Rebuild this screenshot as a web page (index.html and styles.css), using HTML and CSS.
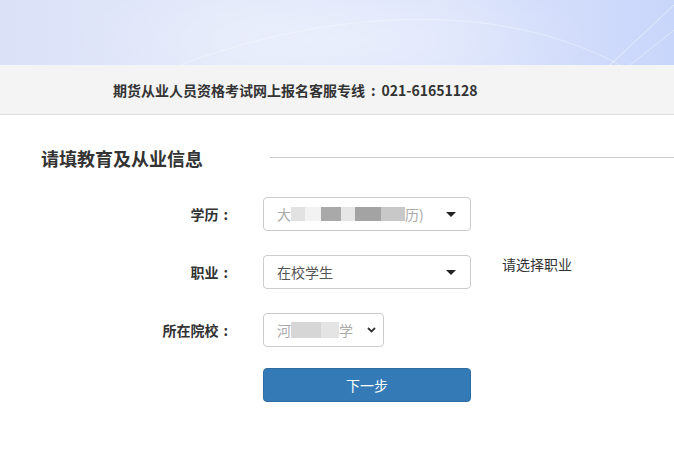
FILE: index.html
```html
<!DOCTYPE html>
<html lang="zh-CN">
<head>
    <meta charset="UTF-8">
    <meta name="viewport" content="width=device-width, initial-scale=1.0">
    <title>期货从业人员资格考试网上报名</title>
<link rel="stylesheet" href="styles.css">
</head>
<body>
    <div class="banner">
        <svg class="banner-lines" width="674" height="65" viewBox="0 0 674 65" preserveAspectRatio="none">
            <path d="M180 65 C 300 20, 480 -10, 620 65" fill="none" stroke="#ffffff" stroke-opacity="0.35" stroke-width="1"/>
            <path d="M610 65 L 674 5" fill="none" stroke="#ffffff" stroke-opacity="0.5" stroke-width="1"/>
            <path d="M630 65 L 674 30" fill="none" stroke="#ffffff" stroke-opacity="0.4" stroke-width="1"/>
        </svg>
    </div>
    <div class="hotline">期货从业人员资格考试网上报名客服专线<span class="colon">:</span>021-61651128</div>

    <div class="section-title">
        <h2>请填教育及从业信息</h2>
        <div class="title-line"></div>
    </div>

    <form class="info-form">
        <div class="form-row">
            <label class="form-label">学历<span class="colon">:</span></label>
            <div class="select wide">
                <span class="masked">
                    <span class="ch faint">大</span>
                    <span class="blk b1"></span>
                    <span class="blk b2"></span>
                    <span class="blk b3"></span>
                    <span class="blk b4"></span>
                    <span class="blk b5"></span>
                    <span class="blk b6"></span>
                    <span class="ch faint">历)</span>
                </span>
                <span class="caret"></span>
            </div>
        </div>
        <div class="form-row">
            <label class="form-label">职业<span class="colon">:</span></label>
            <div class="select wide">
                <span class="value">在校学生</span>
                <span class="caret"></span>
            </div>
            <span class="hint">请选择职业</span>
        </div>
        <div class="form-row school-row">
            <label class="form-label">所在院校<span class="colon">:</span></label>
            <div class="select narrow">
                <span class="masked">
                    <span class="ch faint">河</span>
                    <span class="blk c1"></span>
                    <span class="blk c2"></span>
                    <span class="ch faint">学</span>
                </span>
                <svg class="chevron" width="9" height="6" viewBox="0 0 9 6"><path d="M1 1 L4.5 4.5 L8 1" fill="none" stroke="#333" stroke-width="1.8"/></svg>
            </div>
        </div>
        <div class="form-row btn-row">
            <span class="form-label"></span>
            <button type="button" class="btn-next">下一步</button>
        </div>
    </form>
</body>
</html>
```

FILE: styles.css
```css
body {
    margin: 0;
    padding: 0;
    font-family: "Noto Sans CJK SC", "Liberation Sans", sans-serif;
    color: #333;
    background: #fff;
}

.banner {
    height: 65px;
    background:
        radial-gradient(ellipse 260px 70px at 330px 40px, rgba(255, 255, 255, 0.35), rgba(255, 255, 255, 0)),
        linear-gradient(90deg, #dbe2f8 0%, #e2e8fa 35%, #dce4fb 65%, #c9d6fb 100%);
}

.banner-lines {
    display: block;
}

.colon {
    display: inline-block;
    margin: 0 2px 0 5px;
}

.hotline .colon {
    margin: 0 6px 0 6px;
}

.hotline {
    height: 49px;
    line-height: 50px;
    background: #f4f4f4;
    border-bottom: 1px solid #dcdcdc;
    padding-left: 113px;
    font-size: 14px;
    font-weight: bold;
    color: #333;
}

.section-title {
    display: flex;
    align-items: center;
    padding: 31px 0 0 41px;
}

.section-title h2 {
    margin: 0;
    font-size: 18px;
    font-weight: bold;
    line-height: 24px;
    color: #333;
}

.title-line {
    flex: 1;
    margin-left: 67px;
    border-top: 1px solid #cccccc;
    margin-top: -2px;
}

.info-form {
    padding-top: 27px;
}

.form-row {
    display: flex;
    align-items: center;
    margin-bottom: 24px;
}

.school-row {
    margin-top: 1px;
}

.form-label {
    width: 230px;
    text-align: right;
    font-size: 14px;
    font-weight: bold;
    color: #333;
    margin-right: 33px;
}

.select {
    box-sizing: border-box;
    height: 34px;
    border: 1px solid #cccccc;
    border-radius: 4px;
    display: flex;
    align-items: center;
    padding: 0 14px 0 13px;
    font-size: 14px;
    color: #555;
    background: #fff;
}

.wide {
    width: 208px;
}

.narrow {
    width: 121px;
    padding-right: 7px;
}

.value {
    flex: 1;
}

.masked {
    flex: 1;
    display: flex;
    align-items: center;
    height: 20px;
}

.ch {
    font-size: 14px;
}

.faint {
    color: #aaa;
}

.blk {
    display: inline-block;
    height: 14px;
}

.b1 { width: 14px; background: #e2e2e2; }
.b2 { width: 16px; background: #f2f2f2; }
.b3 { width: 20px; background: #a9a9a9; }
.b4 { width: 14px; background: #e6e6e6; }
.b5 { width: 26px; background: #a3a3a3; }
.b6 { width: 24px; background: #c8c8c8; }
.c1 { width: 30px; background: #d6d6d6; height: 16px; }
.c2 { width: 18px; background: #e4e4e4; height: 16px; }

.caret {
    width: 0;
    height: 0;
    border-left: 5px solid transparent;
    border-right: 5px solid transparent;
    border-top: 5px solid #222;
}

.chevron {
    margin-left: 4px;
}

.hint {
    margin-left: 31px;
    font-size: 14px;
    color: #333;
    align-self: flex-start;
    margin-top: -1px;
}

.btn-row {
    margin-top: -3px;
}

.btn-next {
    width: 208px;
    height: 34px;
    border: 1px solid #2e6da4;
    border-radius: 4px;
    background: #337ab7;
    color: #fff;
    font-family: "Noto Sans CJK SC", sans-serif;
    font-size: 14px;
    cursor: pointer;
}
```
